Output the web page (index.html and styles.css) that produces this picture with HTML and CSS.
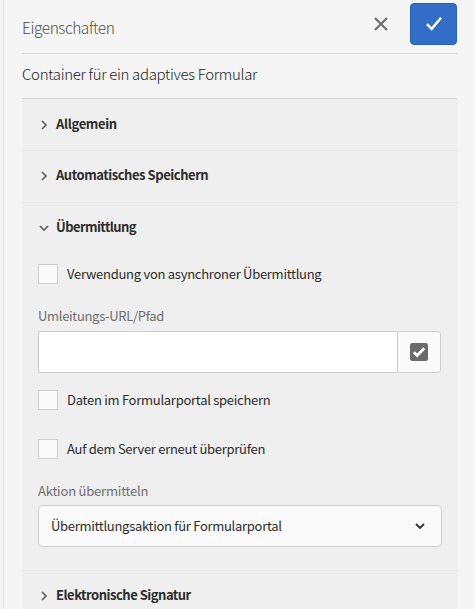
FILE: index.html
```html
<!DOCTYPE html>
<html lang="de">
<head>
<meta charset="utf-8">
<title>Eigenschaften</title>
<link rel="stylesheet" href="styles.css">
</head>
<body>
<main class="panel">
  <header class="toolbar">
    <h1 class="toolbar-title"><span>Eigenschaften</span></h1>
    <button class="cancel" aria-label="Abbrechen"><svg width="14" height="14" viewBox="0 0 14 14"><path d="M1 1L13 13M13 1L1 13"/></svg></button>
    <button class="confirm" aria-label="Fertig"><svg width="18" height="16" viewBox="0 0 18 16"><path d="M2 8.2L6.7 12.8L16 1.8"/></svg></button>
  </header>
  <h2 class="subject"><span>Container für ein adaptives Formular</span></h2>
  <div class="accordion">
    <section class="item">
      <h3 class="item-head"><svg class="chev" width="10" height="10" viewBox="0 0 10 10"><path d="M3 1L7 5L3 9"/></svg><span class="t-allg">Allgemein</span></h3>
    </section>
    <section class="item item-auto">
      <h3 class="item-head"><svg class="chev" width="10" height="10" viewBox="0 0 10 10"><path d="M3 1L7 5L3 9"/></svg><span class="t-auto">Automatisches Speichern</span></h3>
    </section>
    <section class="item item-open">
      <h3 class="item-head"><svg class="chev" width="10" height="10" viewBox="0 0 10 10"><path d="M1 3L5 7L9 3"/></svg><span class="t-ueb">Übermittlung</span></h3>
      <div class="fields">
        <div class="check"><i class="box"></i><span class="t-async">Verwendung von asynchroner Übermittlung</span></div>
        <div class="label label-url"><span class="t-url">Umleitungs-URL/Pfad</span></div>
        <div class="path">
          <div class="path-input"></div>
          <button class="path-button" aria-label="Auswählen"><svg width="18" height="18" viewBox="0 0 18 18"><rect width="18" height="18" rx="2.2"/><path d="M3.8 9.3L7.2 12.5L14.2 5.2"/></svg></button>
        </div>
        <div class="check check-portal"><i class="box"></i><span class="t-portal">Daten im Formularportal speichern</span></div>
        <div class="check check-server"><i class="box"></i><span class="t-server">Auf dem Server erneut überprüfen</span></div>
        <div class="label label-action"><span class="t-action">Aktion übermitteln</span></div>
        <div class="select"><span class="t-select">Übermittlungsaktion für Formularportal</span><svg width="10" height="8" viewBox="0 0 10 8"><path d="M1 2L5 6L9 2"/></svg></div>
      </div>
    </section>
    <section class="item item-sig">
      <h3 class="item-head"><svg class="chev" width="10" height="10" viewBox="0 0 10 10"><path d="M3 1L7 5L3 9"/></svg><span class="t-sig">Elektronische Signatur</span></h3>
    </section>
  </div>
</main>
</body>
</html>
```

FILE: styles.css
```css
* { box-sizing: border-box; }
body {
  margin: 0;
  height: 609px;
  overflow: hidden;
  background: #f5f5f5;
  color: #2c2c2c;
  font: 13px/20px "Noto Sans CJK JP", "Noto Sans", sans-serif;
  letter-spacing: -.27px;
}
h1, h2, h3 { margin: 0; font-weight: 400; white-space: nowrap; }
button { padding: 0; border: 0; background: none; display: flex; align-items: center; justify-content: center; }
svg { display: block; fill: none; flex: none; }
span { white-space: nowrap; }
.panel {
  height: 609px;
  margin-left: 3px;
  padding: 0 17px 0 18px;
  border-left: 1px solid #e0e0e0;
}
.toolbar {
  display: flex;
  align-items: flex-start;
  height: 54px;
  padding-top: 3px;
  margin-right: 1px;
  border-bottom: 1px solid #dcdcdc;
}
.toolbar-title { flex: 1; margin-top: 12px; font-size: 15.5px; font-weight: 300; line-height: 24px; letter-spacing: -.45px; color: #4c4c4c; }
.cancel { width: 14px; height: 14px; margin: 14px 22px 0 0; }
.cancel path { stroke: #6e6e6e; stroke-width: 2.2; }
.confirm { width: 47px; height: 42px; border: 1px solid #2361bd; border-radius: 4px; background: #326ec8; }
.confirm path { stroke: #fff; stroke-width: 2.5; }
.subject {
  height: 45px;
  padding-top: 8px;
  margin-right: 1px;
  border-bottom: 1px solid #d8d8d8;
  font-size: 15px;
  font-weight: 300;
  line-height: 24px;
  letter-spacing: -.33px;
  color: #1c1c1c;
}
.accordion { height: 510px; background: #efefef; }
.item + .item { border-top: 1px solid #e8e8e8; }
.item-head { display: flex; align-items: center; height: 51px; padding-left: 17px; font-size: 13px; font-weight: 700; }
.item-head span { padding-bottom: 2px; }
.item-auto { height: 52px; }
.item-auto .item-head, .item-sig .item-head { height: 49px; }
.chev { margin-right: 7px; }
.chev path { stroke: #5c5c5c; stroke-width: 1.6; }
.item-open { height: 368px; }
.item-open .item-head { height: 49px; }
.fields { padding: 12px 16px 0; }
.check { display: flex; align-items: center; height: 20px; gap: 9px; }
.box { width: 20px; height: 20px; border: 1px solid #cfcfcf; background: #fafafa; }
.label { height: 20px; color: #6e6e6e; }
.label-url { margin-top: 22px; }
.path { display: flex; width: 403px; height: 42px; margin-top: 5px; }
.path-input { flex: 1; border: 1px solid #cbcbcb; background: #fff; }
.path-button { width: 43px; border: 1px solid #d0d0d0; border-left: 0; border-radius: 0 4px 4px 0; background: #fafafa; }
.path-button rect { fill: #6b6b6b; }
.path-button path { stroke: #fff; stroke-width: 2.8; }
.check-portal { margin-top: 17px; }
.check-server { margin-top: 29px; }
.label-action { margin-top: 22px; }
.select {
  display: flex;
  align-items: center;
  justify-content: space-between;
  width: 404px;
  height: 42px;
  margin-top: 4px;
  padding: 0 16px 0 12px;
  border: 1px solid #cfcfcf;
  border-radius: 4px;
  background: #fafafa;
}
.select path { stroke: #323232; stroke-width: 1.8; }
.t-allg { letter-spacing: -.35px; }
.t-auto { letter-spacing: -.45px; }
.t-ueb { letter-spacing: -.58px; }
.t-sig { letter-spacing: -.49px; }
.t-url { letter-spacing: -.31px; }
.t-action { letter-spacing: -.2px; }
.t-select { letter-spacing: -.29px; }
```
